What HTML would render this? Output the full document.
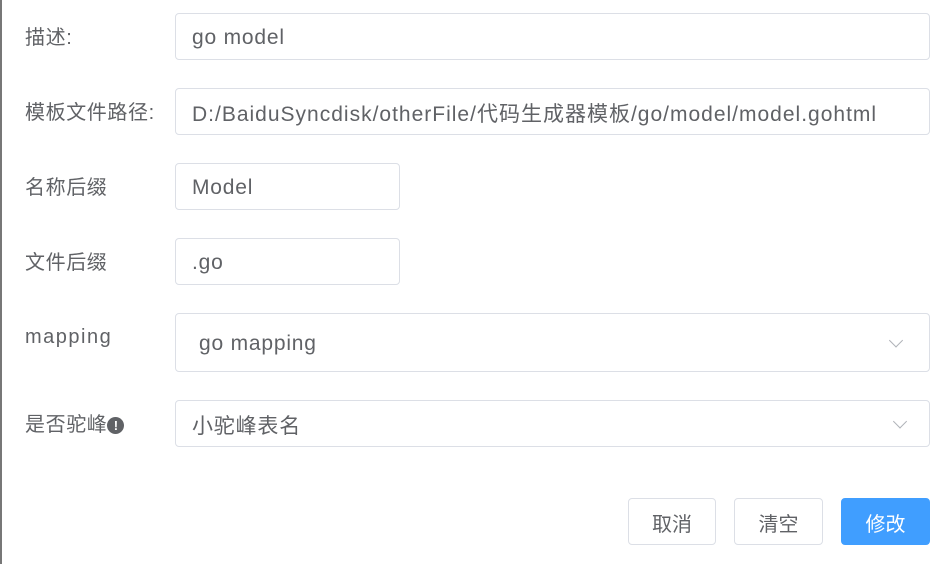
<!DOCTYPE html>
<html><head><meta charset="utf-8"><style>
body{margin:0;width:952px;height:564px;background:#fff;position:relative;overflow:hidden;font-family:"Liberation Sans","Noto Sans CJK SC",sans-serif;color:#606266;}
.edge{position:absolute;left:0;top:0;width:2px;height:564px;background:#777;}
.lbl{position:absolute;left:25px;font-size:20px;line-height:24px;white-space:nowrap;letter-spacing:0.6px;}
.box{position:absolute;border:1px solid #dcdfe6;border-radius:4px;box-sizing:border-box;font-size:21px;padding-left:16px;padding-top:3px;white-space:nowrap;display:flex;align-items:center;letter-spacing:0.8px;}
.arr{position:absolute;right:24px;top:50%;width:9px;height:9px;border-right:1px solid #b0b3b9;border-bottom:1px solid #b0b3b9;transform:translateY(-75%) rotate(45deg);}
.btn{position:absolute;top:498px;height:47px;border:1px solid #dcdfe6;border-radius:4px;box-sizing:border-box;font-size:20px;display:flex;align-items:center;justify-content:center;padding-top:2px;}
.ic{display:inline-block;width:17px;height:17px;border-radius:50%;background:#606266;color:#fff;font-size:13px;font-weight:bold;line-height:17px;text-align:center;vertical-align:1px;letter-spacing:0;}
</style></head><body>
<div class="edge"></div>
<div class="lbl" style="top:26px">描述:</div>
<div class="box" style="left:175px;top:13px;width:755px;height:47px">go model</div>
<div class="lbl" style="top:101px">模板文件路径:</div>
<div class="box" style="left:175px;top:88px;width:755px;height:47px;letter-spacing:1.0px">D:/BaiduSyncdisk/otherFile/代码生成器模板/go/model/model.gohtml</div>
<div class="lbl" style="top:176px">名称后缀</div>
<div class="box" style="left:175px;top:163px;width:225px;height:47px">Model</div>
<div class="lbl" style="top:251px">文件后缀</div>
<div class="box" style="left:175px;top:238px;width:225px;height:47px">.go</div>
<div class="lbl" style="top:325px;letter-spacing:1.5px">mapping</div>
<div class="box" style="left:175px;top:313px;width:755px;height:59px;padding-left:23px">go mapping<span class="arr" style="right:28px"></span></div>
<div class="lbl" style="top:413px">是否驼峰<span class="ic">!</span></div>
<div class="box" style="left:175px;top:400px;width:755px;height:47px">小驼峰表名<span class="arr"></span></div>
<div class="btn" style="left:628px;width:88px">取消</div>
<div class="btn" style="left:734px;width:89px">清空</div>
<div class="btn" style="left:841px;width:89px;background:#409eff;border-color:#409eff;color:#fff">修改</div>
</body></html>
